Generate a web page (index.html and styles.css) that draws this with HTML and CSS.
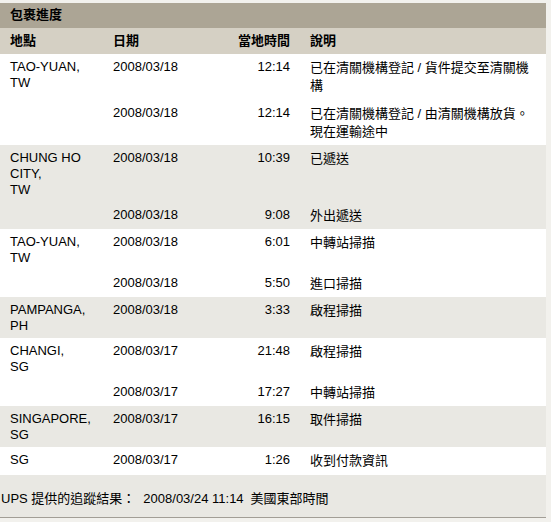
FILE: index.html
```html
<!DOCTYPE html>
<html lang="zh-Hant">
<head>
<meta charset="utf-8">
<title>包裹進度</title>
<link rel="stylesheet" href="styles.css">
</head>
<body>
<div class="page">
  <div class="panel">
    <div class="title">包裹進度</div>
    <table class="track">
      <colgroup>
        <col class="c-loc"><col class="c-date"><col class="c-time"><col class="c-desc">
      </colgroup>
      <thead>
        <tr>
          <th class="loc">地點</th>
          <th class="date">日期</th>
          <th class="time">當地時間</th>
          <th class="desc">說明</th>
        </tr>
      </thead>
      <tbody class="white">
        <tr>
          <td class="loc">TAO-YUAN,<br>TW</td>
          <td class="date">2008/03/18</td>
          <td class="time">12:14</td>
          <td class="desc">已在清關機構登記 / 貨件提交至清關機構</td>
        </tr>
        <tr class="cont">
          <td class="loc"></td>
          <td class="date">2008/03/18</td>
          <td class="time">12:14</td>
          <td class="desc">已在清關機構登記 / 由清關機構放貨。現在運輸途中</td>
        </tr>
      </tbody>
      <tbody class="gray">
        <tr>
          <td class="loc">CHUNG HO<br>CITY,<br>TW</td>
          <td class="date">2008/03/18</td>
          <td class="time">10:39</td>
          <td class="desc">已遞送</td>
        </tr>
        <tr class="cont">
          <td class="loc"></td>
          <td class="date">2008/03/18</td>
          <td class="time">9:08</td>
          <td class="desc">外出遞送</td>
        </tr>
      </tbody>
      <tbody class="white">
        <tr>
          <td class="loc">TAO-YUAN,<br>TW</td>
          <td class="date">2008/03/18</td>
          <td class="time">6:01</td>
          <td class="desc">中轉站掃描</td>
        </tr>
        <tr class="cont">
          <td class="loc"></td>
          <td class="date">2008/03/18</td>
          <td class="time">5:50</td>
          <td class="desc">進口掃描</td>
        </tr>
      </tbody>
      <tbody class="gray">
        <tr>
          <td class="loc">PAMPANGA,<br>PH</td>
          <td class="date">2008/03/18</td>
          <td class="time">3:33</td>
          <td class="desc">啟程掃描</td>
        </tr>
      </tbody>
      <tbody class="white">
        <tr>
          <td class="loc">CHANGI,<br>SG</td>
          <td class="date">2008/03/17</td>
          <td class="time">21:48</td>
          <td class="desc">啟程掃描</td>
        </tr>
        <tr class="cont">
          <td class="loc"></td>
          <td class="date">2008/03/17</td>
          <td class="time">17:27</td>
          <td class="desc">中轉站掃描</td>
        </tr>
      </tbody>
      <tbody class="gray">
        <tr>
          <td class="loc">SINGAPORE,<br>SG</td>
          <td class="date">2008/03/17</td>
          <td class="time">16:15</td>
          <td class="desc">取件掃描</td>
        </tr>
      </tbody>
      <tbody class="white">
        <tr>
          <td class="loc">SG</td>
          <td class="date">2008/03/17</td>
          <td class="time">1:26</td>
          <td class="desc">收到付款資訊</td>
        </tr>
      </tbody>
    </table>
    <div class="footer"><span class="f-label">UPS 提供的追蹤結果：</span><span class="f-stamp">2008/03/24 11:14</span><span class="f-zone">美國東部時間</span></div>
  </div>
</div>
</body>
</html>
```
FILE: styles.css
```css
html, body {
  margin: 0;
  padding: 0;
}
body {
  background: #ecebe6;
  font-family: "Liberation Sans", "Noto Sans CJK TC", sans-serif;
  font-size: 13px;
  color: #000;
}
.page {
  width: 551px;
  height: 522px;
  padding-top: 3px;
  box-sizing: border-box;
  background: #f2f1ed;
}
.panel {
  width: 546px;
  background: #e9e8e3;
  border-bottom: 1px solid #a29e96;
}
.title {
  height: 25px;
  box-sizing: border-box;
  padding: 4px 10px 0;
  line-height: 16px;
  font-weight: bold;
  background: #aca595;
}
.track {
  width: 546px;
  border-collapse: collapse;
  table-layout: fixed;
}
.c-loc { width: 103px; }
.c-date { width: 97px; }
.c-time { width: 100px; }
.c-desc { width: 246px; }
.track th, .track td {
  padding: 5px 10px;
  line-height: 16px;
  vertical-align: top;
  text-align: left;
  font-size: 13px;
}
.track th {
  font-weight: bold;
  background: #d5d0c4;
}
.track .time {
  text-align: right;
}
.track td.loc {
  padding-bottom: 4px;
}
.track td.desc {
  line-height: 18px;
}
.track .cont td {
  padding-bottom: 4px;
}
.white td { background: #ffffff; }
.gray td { background: #e9e8e3; }
.footer {
  padding: 16px 1px 10px;
  line-height: 16px;
  white-space: nowrap;
}
.f-stamp {
  margin-left: 8px;
}
.f-zone {
  margin-left: 7px;
}
```
